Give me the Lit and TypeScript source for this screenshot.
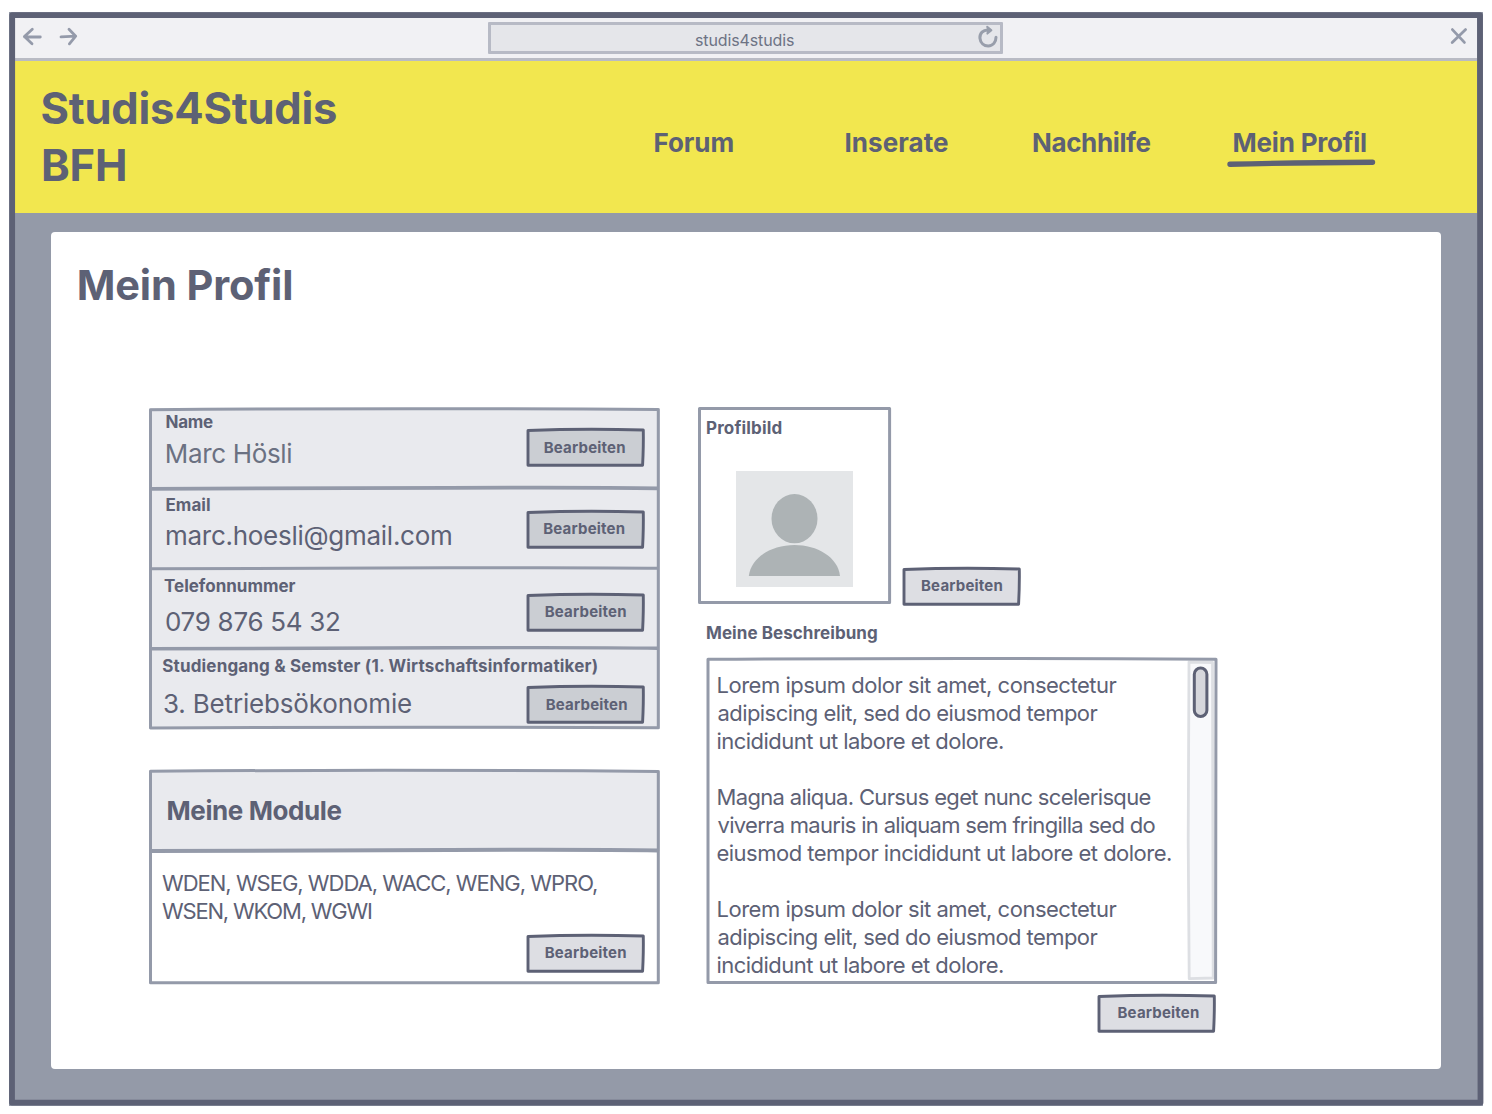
import { LitElement, html, css, svg, nothing } from "lit";
import { customElement, property } from "lit/decorators.js";
import { styleMap } from "lit/directives/style-map.js";

/** One line of text whose inked width is tracked out (or in) to exactly `w` pixels. */
@customElement("fit-text")
class FitText extends LitElement {
  @property() text = "";
  @property({ type: Number }) w = 0;

  static styles = css`
    :host {
      display: block;
      white-space: nowrap;
      flex: none;
    }
    .line {
      display: block;
      font-kerning: normal;
    }
  `;

  firstUpdated() {
    const line = this.renderRoot.querySelector(".line") as HTMLElement;
    const cs = getComputedStyle(line);
    const ctx = document.createElement("canvas").getContext("2d")!;
    ctx.font = `${cs.fontWeight} ${cs.fontSize} ${cs.fontFamily}`;
    const m = ctx.measureText(this.text);
    const ink = m.actualBoundingBoxLeft + m.actualBoundingBoxRight;
    const step = (this.w - ink) / Math.max(1, this.text.length - 1);
    line.style.letterSpacing = `${step.toFixed(3)}px`;
    line.style.marginLeft = `${m.actualBoundingBoxLeft.toFixed(2)}px`;
    this.style.width = `${this.w}px`;
  }

  render() {
    return html`<span class="line">${this.text}</span>`;
  }
}

@customElement("edit-button")
class EditButton extends LitElement {
  @property({ type: Number }) indent = 18;
  @property({ type: Boolean }) dark = false;

  static styles = css`
    :host {
      display: block;
      flex: none;
      width: 119px;
      height: 39px;
    }
    button {
      all: unset;
      display: block;
      position: relative;
      width: 119px;
      height: 39px;
      color: #5d6175;
      font: 700 15px/22px Inter, "Liberation Sans", sans-serif;
    }
    svg {
      position: absolute;
      inset: 0;
    }
    .face {
      position: relative;
      display: flow-root;
      height: 39px;
      padding-top: 8.5px;
      box-sizing: border-box;
    }
  `;

  render() {
    return html`<button>
      <svg width="119" height="39" overflow="visible">
        <path
          d="M2 2.5 Q58 .2 117.3 2 Q117.6 18 116.6 37.2 L2 37.2Z"
          fill=${this.dark ? "#cbced3" : "#dddee3"}
          stroke="#5d6175"
          stroke-width="2.9"
          stroke-linejoin="round"
        />
      </svg>
      <div class="face">
        <fit-text style=${styleMap({ marginLeft: `${this.indent}px` })} text="Bearbeiten" w="81.5"></fit-text>
      </div>
    </button>`;
  }
}

interface Field {
  label: string;
  labelW: number;
  labelX: number;
  labelY: number;
  value: string;
  valueW: number;
  valueX: number;
  valueY: number;
  buttonY: number;
  indent: number;
  soft?: boolean;
}

const FIELDS: Field[] = [
  { label: "Name", labelW: 46.5, labelX: 17.5, labelY: 2.5, value: "Marc Hösli", valueW: 124.5, valueX: 17.8, valueY: 6.4, buttonY: 19, indent: 18, soft: true },
  { label: "Email", labelW: 43.5, labelX: 17.5, labelY: 7, value: "marc.hoesli@gmail.com", valueW: 284, valueX: 18, valueY: 4.5, buttonY: 21.5, indent: 17.5 },
  { label: "Telefonnummer", labelW: 131.5, labelX: 15, labelY: 8, value: "079 876 54 32", valueW: 173, valueX: 17, valueY: 9.5, buttonY: 24.5, indent: 19 },
  { label: "Studiengang & Semster (1. Wirtschaftsinformatiker)", labelW: 435, labelX: 13.2, labelY: 7.5, value: "3. Betriebsökonomie", valueW: 247, valueX: 15, valueY: 12, buttonY: 37, indent: 20 },
];

const NAV = [
  { text: "Forum", w: 79, gap: 0 },
  { text: "Inserate", w: 102.5, gap: 112 },
  { text: "Nachhilfe", w: 117.5, gap: 85 },
  { text: "Mein Profil", w: 132.5, gap: 83, active: true },
];

const LOREM: [string, number][] = [
  ["Lorem ipsum dolor sit amet, consectetur", 399],
  ["adipiscing elit, sed do eiusmod tempor", 380],
  ["incididunt ut labore et dolore.", 285.5],
];

const MAGNA: [string, number][] = [
  ["Magna aliqua. Cursus eget nunc scelerisque", 433],
  ["viverra mauris in aliquam sem fringilla sed do", 438],
  ["eiusmod tempor incididunt ut labore et dolore.", 453.5],
];

const px = (n: number) => `${n}px`;

@customElement("app-root")
class AppRoot extends LitElement {
  static styles = css`
    :host {
      display: block;
      width: 1492px;
      height: 1114px;
      overflow: hidden;
      box-sizing: border-box;
      padding: 12px 9px 8px;
      background: #fff;
      color: #5d6175;
      font-family: Inter, "Liberation Sans", sans-serif;
    }
    .frame {
      position: relative;
      box-sizing: border-box;
      width: 1474px;
      height: 1094px;
      padding: 6px;
      display: flex;
      flex-direction: column;
      background: #949aa8;
    }
    .overlay {
      position: absolute;
      left: 0;
      top: 0;
      overflow: visible;
      pointer-events: none;
    }
    .toolbar {
      height: 43px;
      box-sizing: border-box;
      display: flex;
      align-items: flex-start;
      background: #f1f1f4;
      border-bottom: 3px solid #b9bbc4;
    }
    .toolbar svg {
      flex: none;
    }
    .arrows {
      margin: 9px 0 0 7px;
    }
    .url {
      box-sizing: border-box;
      width: 515px;
      height: 32px;
      margin: 3.5px 0 0 410px;
      border: 3px solid #b7bac5;
      border-radius: 1px;
      background: #e5e6ea;
      display: flex;
      font-size: 16px;
      line-height: 24px;
      color: #6d7384;
    }
    .url fit-text {
      margin: 3.5px 0 0 204px;
    }
    .reload {
      margin: 0 0 0 183.5px;
    }
    .close {
      margin: 9px 0 0 446px;
    }
    .header {
      height: 152px;
      box-sizing: border-box;
      display: flex;
      align-items: flex-start;
      padding: 19px 0 0 26.5px;
      background: #f2e74f;
      font-weight: 700;
    }
    .brand {
      width: 613px;
      font-size: 43.5px;
      line-height: 56px;
    }
    .brand .second {
      margin: 1px 0 0 1.5px;
    }
    .nav {
      display: flex;
      padding-top: 47px;
      font-size: 26px;
      line-height: 32px;
    }
    .item {
      position: relative;
    }
    .item svg {
      position: absolute;
      left: -7px;
      top: 31px;
    }
    .card {
      box-sizing: border-box;
      width: 1390px;
      height: 837px;
      margin: 19px 0 0 36px;
      padding: 25px 0 0 98px;
      border-radius: 4px;
      background: #fff;
    }
    .title {
      margin: 0 0 0 -70.3px;
      height: 151px;
      font-size: 41.5px;
      font-weight: 700;
      line-height: 56px;
    }
    .columns {
      display: flex;
      align-items: flex-start;
    }
    .left {
      width: 511px;
    }
    .panel {
      position: relative;
    }
    .fields {
      height: 321px;
      padding-top: 1px;
      box-sizing: border-box;
      background: #e9eaee;
    }
    .row {
      position: relative;
      display: flex;
      align-items: flex-start;
      height: 80px;
      box-sizing: border-box;
    }
    .row:first-of-type {
      height: 79px;
    }
    .texts {
      width: 376.7px;
      flex: none;
    }
    .label {
      font-size: 17px;
      font-weight: 700;
      line-height: 20px;
    }
    .value {
      font-size: 26px;
      line-height: 32px;
    }
    .soft {
      color: #6b7182;
    }
    .modules {
      margin-top: 41px;
      height: 214px;
    }
    .modules-head {
      height: 81px;
      box-sizing: border-box;
      padding: 25px 0 0 18.5px;
      background: #e9eaee;
      font-size: 26px;
      font-weight: 700;
      line-height: 32px;
    }
    .modules-body {
      padding: 18px 0 0 13px;
      font-size: 22px;
      line-height: 28px;
    }
    .modules-body edit-button {
      margin: 8.7px 0 0 363.7px;
    }
    .right {
      width: 520px;
      margin-left: 38px;
    }
    .picture-row {
      display: flex;
      align-items: flex-start;
    }
    .picture {
      width: 193px;
      height: 197px;
      box-sizing: border-box;
      margin-top: -1px;
      padding: 11px 0 0 9px;
    }
    .avatar {
      display: block;
      margin: 33px 0 0 29.4px;
    }
    .picture-row edit-button {
      margin: 158.7px 0 0 11px;
    }
    .caption {
      margin: 17.3px 0 0 9px;
    }
    .description {
      box-sizing: border-box;
      width: 512px;
      height: 328px;
      margin: 14px 0 0 8px;
      padding: 14px 3px 3px 11.5px;
      display: flex;
      justify-content: space-between;
      font-size: 22px;
      line-height: 28px;
    }
    .blank {
      height: 28px;
    }
    .scroll {
      margin-top: -11px;
      overflow: visible;
      flex: none;
    }
    .right > edit-button {
      margin: 9px 0 0 399px;
    }
  `;

  private line = ([text, w]: [string, number]) => html`<fit-text text=${text} w=${w}></fit-text>`;

  private field = (f: Field) => html`
    <div class="row">
      <div class="texts">
        <fit-text class="label" style=${styleMap({ marginLeft: px(f.labelX), marginTop: px(f.labelY) })} text=${f.label} w=${f.labelW}></fit-text>
        <fit-text class="value ${f.soft ? "soft" : ""}" style=${styleMap({ marginLeft: px(f.valueX), marginTop: px(f.valueY) })} text=${f.value} w=${f.valueW}></fit-text>
      </div>
      <edit-button dark indent=${f.indent} style=${styleMap({ marginTop: px(f.buttonY) })}></edit-button>
    </div>
  `;

  private rule(y: number, width = 3) {
    return svg`<path d=${`M1.5 ${y + 0.8} Q150 ${y + 0.3} 300 ${y - 0.2} T509 ${y + 0.3}`} stroke-width=${width} />`;
  }

  render() {
    return html`
      <div class="frame">
        <div class="toolbar">
          <svg class="arrows" width="56" height="22" fill="none" stroke="#949aaa" stroke-width="2.8" stroke-linecap="round" stroke-linejoin="round">
            <path d="M18.3 10 H2.6 M10.3 2.2 L2.4 9.5 L10 16.7" />
            <path d="M39 9.9 L53.7 9.2 M47 2.2 L53.7 9.2 L47.4 16.8" />
          </svg>
          <div class="url">
            <fit-text text="studis4studis" w="99"></fit-text>
            <svg class="reload" width="22" height="26" fill="none" stroke="#989eab" stroke-width="3">
              <path d="M10.5 5 C5 4.6 1.6 8.4 1.9 13 C2.4 18 6 21 10.2 21 C15 21 18 17 18 12.2" stroke-linecap="round" />
              <path d="M9.2 1.8 L13.4 5.2 L9.4 8.6 L10.2 5 Z" fill="#989eab" stroke-width="2" stroke-linejoin="round" />
            </svg>
          </div>
          <svg class="close" width="20" height="20" fill="none" stroke="#949aaa" stroke-width="2.8" stroke-linecap="round">
            <path d="M3.4 2.6 L15.4 15.4 M16.6 2.6 L3.2 15.6" />
          </svg>
        </div>

        <div class="header">
          <div class="brand">
            <fit-text text="Studis4Studis" w="294.5"></fit-text>
            <fit-text class="second" text="BFH" w="82"></fit-text>
          </div>
          <div class="nav">
            ${NAV.map(
              (n) => html`<div class="item" style=${styleMap({ marginLeft: px(n.gap) })}>
                <fit-text text=${n.text} w=${n.w}></fit-text>
                ${n.active
                  ? html`<svg width="150" height="10"><path d="M3 6.2 Q70 4.6 145.5 4.3" fill="none" stroke="#5d6175" stroke-width="5.4" stroke-linecap="round" /></svg>`
                  : nothing}
              </div>`
            )}
          </div>
        </div>

        <div class="card">
          <div class="title"><fit-text text="Mein Profil" w="212.5"></fit-text></div>
          <div class="columns">
            <div class="left">
              <div class="panel fields">
                <svg class="overlay" width="511" height="321" fill="none" stroke="#949aa9" stroke-width="3" stroke-linejoin="round">
                  <path d="M1.5 1.7 Q255 -.2 509.3 1.6 L509.3 319.8 Q255 318.6 1.5 320 Z" />
                  ${this.rule(80, 3.8)} ${this.rule(160)} ${this.rule(240, 3.4)}
                </svg>
                ${FIELDS.map(this.field)}
              </div>
              <div class="panel modules">
                <div class="modules-head"><fit-text text="Meine Module" w="174"></fit-text></div>
                <div class="modules-body">
                  <fit-text text="WDEN, WSEG, WDDA, WACC, WENG, WPRO," w="435"></fit-text>
                  <fit-text text="WSEN, WKOM, WGWI" w="209"></fit-text>
                  <edit-button indent="19"></edit-button>
                </div>
                <svg class="overlay" width="511" height="214" fill="none" stroke="#949aa9" stroke-width="3" stroke-linejoin="round">
                  <path d="M1.5 1.2 Q255 -.6 509.3 1.5 L509.3 212.8 L1.5 212.8 Z" />
                  ${this.rule(80.2, 4)}
                </svg>
              </div>
            </div>

            <div class="right">
              <div class="picture-row">
                <div class="panel picture">
                  <svg class="overlay" width="193" height="197" fill="none" stroke="#949aa9" stroke-width="3" stroke-linejoin="round">
                    <path d="M1.5 1.6 H191.6 V195.6 H1.5 Z" />
                  </svg>
                  <fit-text class="label" text="Profilbild" w="74.5"></fit-text>
                  <svg class="avatar" width="117" height="116">
                    <rect width="117" height="116" fill="#e4e6e8" />
                    <ellipse cx="58.5" cy="47.7" rx="23" ry="24.6" fill="#adb3b5" />
                    <path d="M12.8 105 C15 86 36 74 58.5 74 C81 74 102 86 104 105 Z" fill="#adb3b5" />
                  </svg>
                </div>
                <edit-button indent="19"></edit-button>
              </div>
              <fit-text class="label caption" text="Meine Beschreibung" w="170"></fit-text>
              <div class="panel description">
                <div>
                  ${LOREM.map(this.line)}
                  <div class="blank"></div>
                  ${MAGNA.map(this.line)}
                  <div class="blank"></div>
                  ${LOREM.map(this.line)}
                </div>
                <svg class="scroll" width="28" height="322">
                  <path d="M2 2 L25.5 2.5 L26.2 318 L2.2 318.6 L1.2 180 Z" fill="#f8f9fb" stroke="#dddfe3" stroke-width="2.8" stroke-linejoin="round" />
                  <rect x="7.3" y="8" width="12.6" height="48.5" rx="6.3" fill="#d6d7dc" stroke="#5d6175" stroke-width="3" />
                </svg>
                <svg class="overlay" width="512" height="328" fill="none" stroke="#949aa9" stroke-width="3" stroke-linejoin="round">
                  <path d="M2 2.2 Q260 .6 510 2.2 L509.6 325.5 L2 325.5 Z" />
                </svg>
              </div>
              <edit-button indent="20.5"></edit-button>
            </div>
          </div>
        </div>

        <svg class="overlay" width="1474" height="1094" fill="none" stroke="#5d6175" stroke-width="5.8" stroke-linejoin="round">
          <path d="M3.2 3.2 Q400 2 737 3 T1471 3.2 Q1473 500 1471.5 1090.6 L3 1090.6 Q1.4 560 3.2 3.2 Z" />
        </svg>
      </div>
    `;
  }
}
